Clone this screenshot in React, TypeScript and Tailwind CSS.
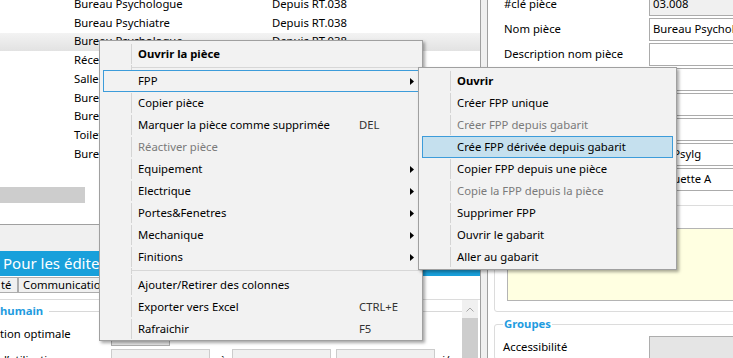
import React from 'react';

type Entry =
  | { sep: true; tall?: boolean }
  | {
      sep?: false;
      label: string;
      bold?: boolean;
      disabled?: boolean;
      sub?: boolean;
      shortcut?: string;
      active?: boolean;
    };

const mainItems: Entry[] = [
  { label: 'Ouvrir la pièce', bold: true },
  { sep: true },
  { label: 'FPP', sub: true, active: true },
  { label: 'Copier pièce' },
  { label: 'Marquer la pièce comme supprimée', shortcut: 'DEL' },
  { label: 'Réactiver pièce', disabled: true },
  { label: 'Equipement', sub: true },
  { label: 'Electrique', sub: true },
  { label: 'Portes&Fenetres', sub: true },
  { label: 'Mechanique', sub: true },
  { label: 'Finitions', sub: true },
  { sep: true, tall: true },
  { label: 'Ajouter/Retirer des colonnes' },
  { label: 'Exporter vers Excel', shortcut: 'CTRL+E' },
  { label: 'Rafraichir', shortcut: 'F5' },
];

const fppItems: Entry[] = [
  { label: 'Ouvrir', bold: true },
  { label: 'Créer FPP unique' },
  { label: 'Créer FPP depuis gabarit', disabled: true },
  { label: 'Crée FPP dérivée depuis gabarit', active: true },
  { label: 'Copier FPP depuis une pièce' },
  { label: 'Copie la FPP depuis la pièce', disabled: true },
  { label: 'Supprimer FPP' },
  { label: 'Ouvrir le gabarit' },
  { label: 'Aller au gabarit' },
];

const rooms = [
  ['Bureau Psychologue', 'Depuis RT.038'],
  ['Bureau Psychiatre', 'Depuis RT.038'],
  ['Bureau Psychologue', 'Depuis RT.038'],
  ['Réception', 'Depuis RT.038'],
  ['Salle d’attente', 'Depuis RT.038'],
  ['Bureau Psychologue', 'Depuis RT.038'],
  ['Bureau Psychiatre', 'Depuis RT.038'],
  ['Toilettes', 'Depuis RT.038'],
  ['Bureau Infirmier', 'Depuis RT.038'],
];

const fields = [
  ['#clé pièce', '03.008'],
  ['Nom pièce', 'Bureau Psychologue'],
  ['Description nom pièce', ''],
  ['Étage', ''],
  ['Département', ''],
  ['Fonction', ''],
  ['Nom court', 'Bur.Psylg'],
  ['Étiquette', 'Étiquette A'],
];

function Arrow() {
  return (
    <svg width="4" height="7" viewBox="0 0 4 7" className="shrink-0">
      <path d="M0 0L4 3.5L0 7Z" fill="#000" />
    </svg>
  );
}

function ChevronDown() {
  return (
    <svg width="7" height="4" viewBox="0 0 7 4" fill="none" stroke="#a0a0a0" strokeWidth="1">
      <path d="M0.5 0.5L3.5 3.5L6.5 0.5" />
    </svg>
  );
}

function ChevronUp() {
  return (
    <svg width="8" height="5" viewBox="0 0 8 5" fill="none" stroke="#a6a6a6" strokeWidth="1">
      <path d="M0.5 4.5L4 1L7.5 4.5" />
    </svg>
  );
}

function Menu({ items, className, labelW }: { items: Entry[]; className: string; labelW?: string }) {
  return (
    <div
      className={`absolute bg-[#f2f2f2] border border-[#a0a0a0] shadow-[2px_2px_3px_rgba(0,0,0,0.35)] ${className}`}
    >
      {items.map((it, i) =>
        it.sep ? (
          <div key={i} className={`flex ml-[3px] ${it.tall ? 'h-[6px]' : 'h-[5px]'}`}>
            <div className="w-[28px] shrink-0" />
            <div className="flex-1 border-l border-[#d4d4d4]">
              <div className="mt-[2px] h-px bg-[#d7d7d7]" />
            </div>
          </div>
        ) : (
          <div
            key={i}
            className={[
              'flex h-[22px] mx-[3px] border',
              it.active && it.sub ? 'border-[#3d9cda]' : '',
              it.active && !it.sub ? 'border-[#3d9cda] bg-[#c5e0ee]' : '',
              !it.active ? 'border-transparent' : '',
            ].join(' ')}
          >
            <div className="w-[27px] shrink-0" />
            <div
              className={[
                'flex-1 flex items-center pl-[6px] pr-[4px] border-l',
                it.active ? 'border-transparent' : 'border-[#d4d4d4]',
              ].join(' ')}
            >
              <span
                className={[
                  'whitespace-nowrap shrink-0',
                  labelW ?? '',
                  it.bold ? 'font-bold' : '',
                  it.disabled ? 'text-[#7a7a7a]' : 'text-black',
                ].join(' ')}
              >
                {it.label}
              </span>
              {it.shortcut && <span className="text-[#333]">{it.shortcut}</span>}
              {it.sub && (
                <span className="ml-auto">
                  <Arrow />
                </span>
              )}
            </div>
          </div>
        ),
      )}
    </div>
  );
}

function LeftPanel() {
  return (
    <div className="w-[481px] shrink-0 flex flex-col border-r border-[#a0a0a0] overflow-hidden">
      {/* room list */}
      <div className="h-[187px] shrink-0 overflow-hidden bg-white">
        <div className="-mt-[5px]">
          {rooms.map(([name, src], i) => (
            <div
              key={i}
              className={[
                'flex items-center h-[18.75px] pl-[74px] whitespace-nowrap',
                i === 2 ? 'bg-linear-to-b from-[#f3f3f3] to-[#e2e2e2]' : '',
              ].join(' ')}
            >
              <span className="w-[198px] shrink-0">{name}</span>
              <span>{src}</span>
            </div>
          ))}
        </div>
      </div>
      <div className="h-[16px] shrink-0 bg-white">
        <div className="w-[85px] h-full bg-[#cdcdcd]" />
      </div>
      <div className="h-[21px] shrink-0 bg-white" />
      <div className="h-[27px] shrink-0 bg-[#f0f0f0] border-t border-[#a0a0a0]" />
      <div className="h-[25px] shrink-0 bg-[#18a0db] text-white text-[15px] leading-[25px] pl-[3px] whitespace-nowrap">
        Pour les éditer
      </div>
      <div className="h-[1px] shrink-0 bg-white" />
      <div className="flex h-[16px] shrink-0 whitespace-nowrap leading-[14px]">
        <div className="w-[18px] pl-[1px] bg-[#f0f0f0] border-y border-r border-[#adadad] overflow-hidden">té</div>
        <div className="w-[110px] pl-[4px] bg-[#f0f0f0] border-y border-l border-[#adadad] overflow-hidden">
          Communication
        </div>
      </div>
      <div className="flex-1 min-h-0 bg-white pt-[6px] flex flex-col">
        <div className="flex-1 flex border-t border-[#dcdcdc] pr-[2px]">
          <div className="flex-1 whitespace-nowrap">
            <div className="h-[22px] flex items-center gap-[6px]">
              <span className="font-bold text-[#1f9ce0]">humain</span>
              <div className="flex-1 h-px bg-[#d8d8d8]" />
            </div>
            <div className="h-[25px] flex items-center">
              <span className="w-[111px] shrink-0">tion optimale</span>
              <div className="w-[59px] h-[22px] bg-[#e5e5e5] border border-[#adadad]" />
            </div>
            <div className="h-[25px] flex items-start pt-[2px]">
              <span className="w-[111px] shrink-0 leading-[22px]">d’utilisation</span>
              <div className="w-[99px] h-[22px] bg-[#f0f0f0] border border-[#cccccc] flex items-center justify-end pr-[4px]">
                <ChevronDown />
              </div>
              <span className="ml-[10px] mr-[6px] leading-[22px]">à</span>
              <div className="w-[99px] h-[22px] bg-[#f0f0f0] border border-[#cccccc] flex items-center justify-end pr-[4px]">
                <ChevronDown />
              </div>
              <div className="ml-[5px] w-[99px] h-[22px] bg-[#f0f0f0] border border-[#cccccc] flex items-center justify-end pr-[4px]">
                <ChevronDown />
              </div>
              <span className="ml-[7px] leading-[22px]">i/o</span>
            </div>
          </div>
          <div className="w-[16px] bg-[#f0f0f0] flex flex-col">
            <div className="h-[18px] flex items-center justify-center">
              <ChevronUp />
            </div>
            <div className="flex-1 bg-[#cdcdcd]" />
          </div>
        </div>
      </div>
    </div>
  );
}

function RightPanel() {
  return (
    <div className="flex-1 min-w-0 bg-white border-l border-[#a0a0a0] overflow-hidden whitespace-nowrap">
      <div className="-mt-[8px] pl-[16px]">
        {fields.map(([label, value], i) => (
          <div key={i} className="h-[25px] flex items-center">
            <span className="w-[145px] shrink-0">{label}</span>
            <div
              className={[
                'w-[120px] shrink-0 h-[23px] border border-[#ababab] flex items-center pl-[3px]',
                i === 0 ? 'bg-[#f0f0f0]' : 'bg-white',
              ].join(' ')}
            >
              {value}
            </div>
          </div>
        ))}
      </div>
      <div className="ml-[6px] mt-[13px] w-[260px] h-[107px] border border-[#dcdcdc] rounded-[3px] pl-[12px] pt-[22px]">
        <div className="h-[73px] bg-[#ffffe1] border border-[#b4b4b4]" />
      </div>
      <fieldset className="ml-[6px] mt-[4px] w-[260px] border border-[#dcdcdc] rounded-[3px] pl-[8px] pt-[4px]">
        <legend className="px-[1px] font-bold text-[#1f9ce0] leading-[16px]">Groupes</legend>
        <div className="h-[23px] flex items-center">
          <span className="w-[146px] shrink-0">Accessibilité</span>
          <div className="w-[100px] h-[23px] bg-[#e5e5e5] border border-[#adadad]" />
        </div>
      </fieldset>
    </div>
  );
}

export default function App() {
  return (
    <div className="relative w-[733px] h-[358px] overflow-hidden flex bg-white text-black text-[11.3px] font-['Noto_Sans',sans-serif]">
      <LeftPanel />
      <div className="w-[6px] shrink-0 bg-[#f0f0f0]" />
      <RightPanel />
      <Menu items={mainItems} className="left-[99px] top-[40px] w-[324px] pt-[2px]" labelW="w-[221px]" />
      <Menu items={fppItems} className="left-[418px] top-[67px] w-[259px] pt-[2px] pb-[1px]" />
    </div>
  );
}
